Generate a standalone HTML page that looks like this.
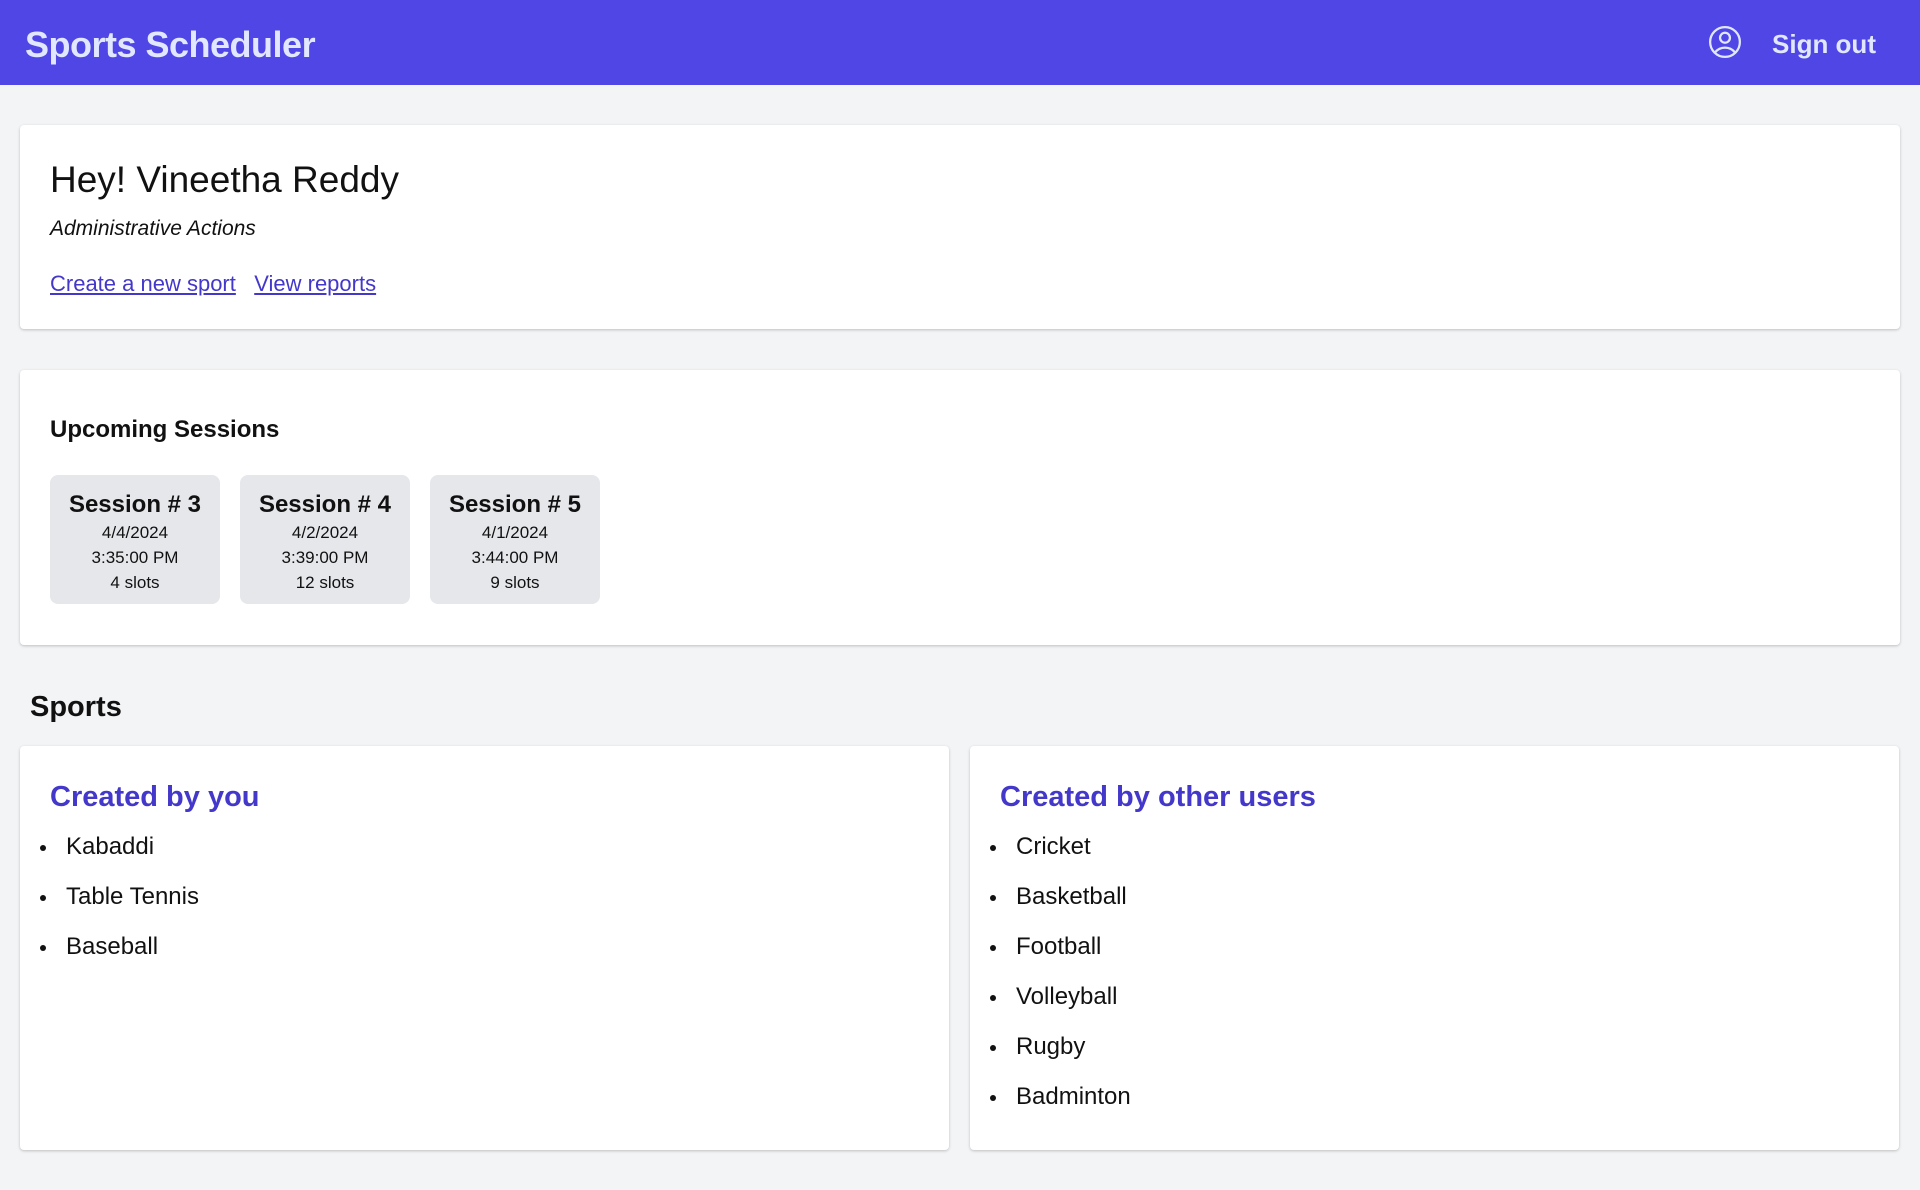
<!DOCTYPE html>
<html><head><meta charset="utf-8"><style>
*{box-sizing:border-box;margin:0;padding:0}
body{width:1920px;height:1190px;background:#f3f4f6;font-family:"Liberation Sans",sans-serif;color:#111;position:relative;overflow:hidden}
.hdr{position:absolute;left:0;top:0;width:1920px;height:85px;background:#4f46e5}
.hdr .t{position:absolute;left:25px;top:24px;font-size:36px;font-weight:bold;color:#e0e7ff;letter-spacing:-0.5px}
.hdr .so{position:absolute;left:1772px;top:29px;font-size:26px;font-weight:bold;color:#e0e7ff}
.hdr svg{position:absolute;left:1708px;top:25px}
.card{position:absolute;background:#fff;border-radius:4px;box-shadow:0 1px 3px rgba(0,0,0,.15),0 1px 2px rgba(0,0,0,.08)}
a{color:#4338ca;text-decoration:underline}
.ses{position:absolute;top:105px;width:170px;height:129px;background:#e5e7eb;border-radius:8px;text-align:center}
.ses b{display:block;margin-top:15px;font-size:24px;line-height:30px}
.ses span{display:block;font-size:17px;line-height:25px}
h3{position:absolute;left:30px;top:35px;font-size:29px;color:#4338ca}
ul{position:absolute;left:26px;top:81px;list-style:none}
li{font-size:24px;height:50px;line-height:40px;position:relative;padding-left:20px}
li:before{content:"";position:absolute;left:-6px;top:18px;width:6px;height:6px;border-radius:50%;background:#111}
</style></head><body>
<div class="hdr"><div class="t">Sports Scheduler</div>
<svg width="34" height="34" viewBox="0 0 24 24" fill="none" stroke="#e0e7ff" stroke-width="1.6"><circle cx="12" cy="12" r="10.5"/><circle cx="12" cy="9" r="3.5"/><path d="M5 19.3c1.8-2.2 4.3-3.3 7-3.3s5.2 1.1 7 3.3"/></svg>
<div class="so">Sign out</div></div>

<div class="card" style="left:20px;top:125px;width:1880px;height:204px">
<div style="position:absolute;left:30px;top:34px;font-size:37px">Hey! Vineetha Reddy</div>
<div style="position:absolute;left:30px;top:92px;font-size:21px;font-style:italic">Administrative Actions</div>
<div style="position:absolute;left:30px;top:146px;font-size:22px"><a>Create a new sport</a>&nbsp;&nbsp;&nbsp;<a>View reports</a></div>
</div>

<div class="card" style="left:20px;top:370px;width:1880px;height:275px">
<div style="position:absolute;left:30px;top:46px;font-size:24px;font-weight:bold">Upcoming Sessions</div>
<div class="ses" style="left:30px"><b>Session # 3</b><span>4/4/2024</span><span>3:35:00 PM</span><span>4 slots</span></div>
<div class="ses" style="left:220px"><b>Session # 4</b><span>4/2/2024</span><span>3:39:00 PM</span><span>12 slots</span></div>
<div class="ses" style="left:410px"><b>Session # 5</b><span>4/1/2024</span><span>3:44:00 PM</span><span>9 slots</span></div>
</div>

<div style="position:absolute;left:30px;top:691px;font-size:29px;font-weight:bold">Sports</div>

<div class="card" style="left:20px;top:746px;width:929px;height:404px">
<h3>Created by you</h3>
<ul><li>Kabaddi</li><li>Table Tennis</li><li>Baseball</li></ul>
</div>
<div class="card" style="left:970px;top:746px;width:929px;height:404px">
<h3>Created by other users</h3>
<ul><li>Cricket</li><li>Basketball</li><li>Football</li><li>Volleyball</li><li>Rugby</li><li>Badminton</li></ul>
</div>
</body></html>
